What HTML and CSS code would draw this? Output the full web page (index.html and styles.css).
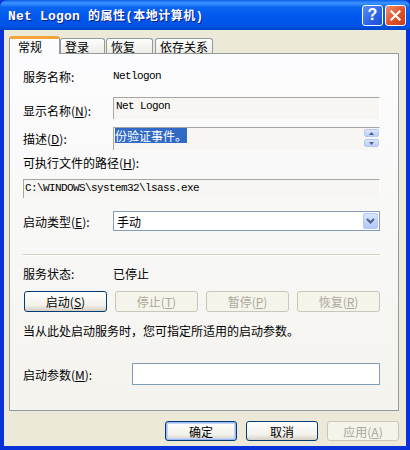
FILE: index.html
```html
<!DOCTYPE html>
<html lang="zh-CN">
  <head>
    <meta charset="UTF-8" />
    <meta name="viewport" content="width=device-width, initial-scale=1.0" />
    <title>Net Logon 的属性(本地计算机)</title>
    <link rel="stylesheet" href="styles.css">
  </head>
  <body>
    <div class="window">
      <div class="titlebar">
        <span class="title">Net Logon <span class="title-cjk">的属性(本地计算机)</span></span>
        <div class="caption-buttons">
          <span class="cap help">?</span>
          <span class="cap close">
            <svg width="11" height="11" viewBox="0 0 11 11">
              <path d="M1.5 1.5 L9.5 9.5 M9.5 1.5 L1.5 9.5" stroke="#fff" stroke-width="2.2" stroke-linecap="square" />
            </svg>
          </span>
        </div>
      </div>

      <div class="client">
        <div class="tabs">
          <span class="tab active">常规</span>
          <span class="tab tab-logon">登录</span>
          <span class="tab tab-recover">恢复</span>
          <span class="tab tab-deps">依存关系</span>
        </div>

        <div class="panel">
          <div class="row name-row">
            <span class="label">服务名称:</span>
            <span class="mono">Netlogon</span>
          </div>

          <div class="row display-row">
            <span class="label">显示名称(<u>N</u>):</span>
            <div class="readonly display-box mono">Net Logon</div>
          </div>

          <div class="row desc-row">
            <span class="label">描述(<u>D</u>):</span>
            <div class="readonly desc-box">
              <span class="selected">份验证事件。</span>
              <div class="scroll">
                <span class="scroll-btn">
                  <svg width="5" height="3" viewBox="0 0 5 3"><path d="M0 3 L2.5 0 L5 3 Z" fill="#4d6185" /></svg>
                </span>
                <span class="scroll-btn">
                  <svg width="5" height="3" viewBox="0 0 5 3"><path d="M0 0 L2.5 3 L5 0 Z" fill="#4d6185" /></svg>
                </span>
              </div>
            </div>
          </div>

          <div class="path-label">可执行文件的路径(<u>H</u>):</div>
          <div class="readonly path-box mono">C:\WINDOWS\system32\lsass.exe</div>

          <div class="row startup-row">
            <span class="label">启动类型(<u>E</u>):</span>
            <div class="select">
              <span class="select-value">手动</span>
              <span class="drop">
                <svg width="9" height="6" viewBox="0 0 9 6">
                  <path d="M1 1 L4.5 4.5 L8 1" fill="none" stroke="#4d6185" stroke-width="2" />
                </svg>
              </span>
            </div>
          </div>

          <div class="separator"></div>

          <div class="row status-row">
            <span class="label">服务状态:</span>
            <span>已停止</span>
          </div>

          <div class="svc-buttons">
            <button class="btn">启动(<u>S</u>)</button>
            <button class="btn" disabled>停止(<u>T</u>)</button>
            <button class="btn" disabled>暂停(<u>P</u>)</button>
            <button class="btn" disabled>恢复(<u>R</u>)</button>
          </div>

          <p class="hint">当从此处启动服务时，您可指定所适用的启动参数。</p>

          <div class="row params-row">
            <span class="label params-label">启动参数(<u>M</u>):</span>
            <input class="textbox" type="text" />
          </div>
        </div>

        <div class="footer">
          <button class="btn dlg default">确定</button>
          <button class="btn dlg">取消</button>
          <button class="btn dlg" disabled>应用(<u>A</u>)</button>
        </div>
      </div>
    </div>
  </body>
</html>
```

FILE: styles.css
```css
body {
  margin: 0;
  font-family: "Noto Sans CJK SC", "Liberation Sans", sans-serif;
  font-size: 12px;
  color: #000;
  background: #0831d9;
}
u {
  text-decoration: underline;
  text-underline-offset: 1px;
}
.window {
  width: 410px;
  height: 450px;
  box-sizing: border-box;
  display: flex;
  flex-direction: column;
  background: #0831d9;
  border-radius: 7px 7px 0 0;
  overflow: hidden;
}
.titlebar {
  height: 30px;
  flex: none;
  display: flex;
  align-items: center;
  justify-content: space-between;
  padding: 0 4px 0 8px;
  background: linear-gradient(#0a5fe8 0%, #3d95ff 10%, #0a63f0 25%, #0058ee 55%, #0053e6 85%, #0046cc 100%);
}
.title {
  color: #fff;
  font-family: "Liberation Mono", "Noto Sans CJK SC", monospace;
  font-weight: bold;
  font-size: 13px;
  text-shadow: 1px 1px 0 #0a1e8c;
  letter-spacing: 0.2px;
}
.title-cjk {
  font-size: 12px;
  letter-spacing: 0.5px;
}
.caption-buttons {
  display: flex;
  gap: 2px;
}
.cap {
  width: 19px;
  height: 19px;
  border: 1px solid #fff;
  border-radius: 3px;
  display: flex;
  align-items: center;
  justify-content: center;
  color: #fff;
}
.help {
  background: linear-gradient(135deg, #5c8ff7, #2a62e8 60%, #1b4fd6);
  font-family: "Liberation Sans", sans-serif;
  font-weight: bold;
  font-size: 16px;
}
.close {
  background: linear-gradient(135deg, #f0906e, #e0512b 55%, #c83a17);
}
.client {
  flex: 1;
  margin: 0 4px 4px;
  background: #ece9d8;
  padding: 6px 7px 0 5px;
  display: flex;
  flex-direction: column;
}
.tabs {
  display: flex;
  align-items: flex-end;
  height: 17px;
  position: relative;
  z-index: 1;
}
.tab {
  height: 15px;
  line-height: 15px;
  box-sizing: border-box;
  padding-left: 4px;
  border: 1px solid #919b9c;
  border-bottom: none;
  border-radius: 3px 3px 0 0;
  background: linear-gradient(#fefefe, #ecebe6);
}
.tab.active {
  width: 51px;
  height: 18px;
  padding-left: 8px;
  margin-bottom: -1px;
  background: #fcfcfe;
  border-top: 3px solid #f2a53a;
  line-height: 16px;
}
.tab-logon {
  width: 45px;
}
.tab-recover {
  width: 47px;
  margin-left: 1px;
}
.tab-deps {
  width: 58px;
  margin-left: 2px;
}
.panel {
  height: 358px;
  box-sizing: border-box;
  border: 1px solid #919b9c;
  background: linear-gradient(#fcfcfe, #f4f3ee);
  padding: 12px 18px 0 13px;
  display: flex;
  flex-direction: column;
}
.row {
  display: flex;
  align-items: center;
}
.label {
  width: 90px;
  flex: none;
}
.mono {
  font-family: "Liberation Mono", monospace;
  font-size: 11px;
  letter-spacing: -0.6px;
}
.name-row {
  height: 20px;
}
.readonly {
  flex: 1;
  box-sizing: border-box;
  border-top: 1px solid #a7a6a0;
  border-left: 1px solid #a7a6a0;
  border-right: 1px solid #fff;
  background: #f7f6f2;
}
.display-row {
  margin-top: 11px;
  align-items: flex-start;
}
.display-row .label {
  padding-top: 5px;
}
.display-box {
  height: 22px;
  padding: 2px 2px;
  line-height: 12px;
}
.desc-row {
  margin-top: 8px;
}
.desc-box {
  height: 23px;
  display: flex;
  justify-content: space-between;
  padding: 0 0 0 1px;
}
.selected {
  background: #316ac5;
  color: #fff;
  height: 15px;
  line-height: 15px;
  align-self: flex-start;
}
.scroll {
  display: flex;
  flex-direction: column;
  gap: 2px;
  padding-top: 1px;
}
.scroll-btn {
  width: 15px;
  height: 8px;
  box-sizing: border-box;
  border: 1px solid #b4c8f6;
  border-radius: 2px;
  background: linear-gradient(#dce6fd, #b9cdf7);
  display: flex;
  align-items: center;
  justify-content: center;
}
.path-label {
  margin-top: 5px;
  height: 16px;
  line-height: 16px;
}
.path-box {
  flex: none;
  margin-top: 8px;
  height: 19px;
  line-height: 17px;
  padding-left: 1px;
}
.startup-row {
  margin-top: 13px;
}
.select {
  flex: 1;
  height: 20px;
  box-sizing: border-box;
  border: 1px solid #7f9db9;
  background: #fff;
  display: flex;
  align-items: center;
  justify-content: space-between;
  padding: 0 1px 0 3px;
}
.drop {
  width: 15px;
  height: 16px;
  box-sizing: border-box;
  border: 1px solid #b4c8f6;
  border-radius: 2px;
  background: linear-gradient(#dae5fd, #b2c8f8);
  display: flex;
  align-items: center;
  justify-content: center;
}
.separator {
  margin-top: 23px;
  height: 1px;
  background: #d0d0bf;
  border-bottom: 1px solid #fff;
}
.status-row {
  margin-top: 10px;
  height: 14px;
}
.svc-buttons {
  margin-top: 11px;
  display: flex;
  justify-content: space-between;
  padding-left: 1px;
}
.btn {
  width: 83px;
  height: 21px;
  box-sizing: border-box;
  border: 1px solid #003c74;
  border-radius: 3px;
  background: linear-gradient(#ffffff, #f2f1ea 70%, #d6d0c5);
  font-family: "Noto Sans CJK SC", sans-serif;
  font-size: 12px;
  color: #000;
  padding: 0;
}
.btn:disabled {
  border-color: #c9c7ba;
  background: #f5f4ea;
  color: #aca899;
}
.hint {
  margin: 12px 0 0;
  height: 14px;
  line-height: 14px;
}
.params-row {
  margin-top: 25px;
}
.params-label {
  width: 109px;
}
.textbox {
  flex: 1;
  height: 22px;
  box-sizing: border-box;
  border: 1px solid #7f9db9;
  background: #fff;
  margin: 0;
}
.footer {
  margin-top: 10px;
  display: flex;
  justify-content: flex-end;
  gap: 9px;
}
.dlg {
  width: 72px;
  height: 20px;
}
.default {
  box-shadow: inset 0 0 0 1px #9bb8f2, inset 0 0 0 2px #c3d4f7;
}
```
